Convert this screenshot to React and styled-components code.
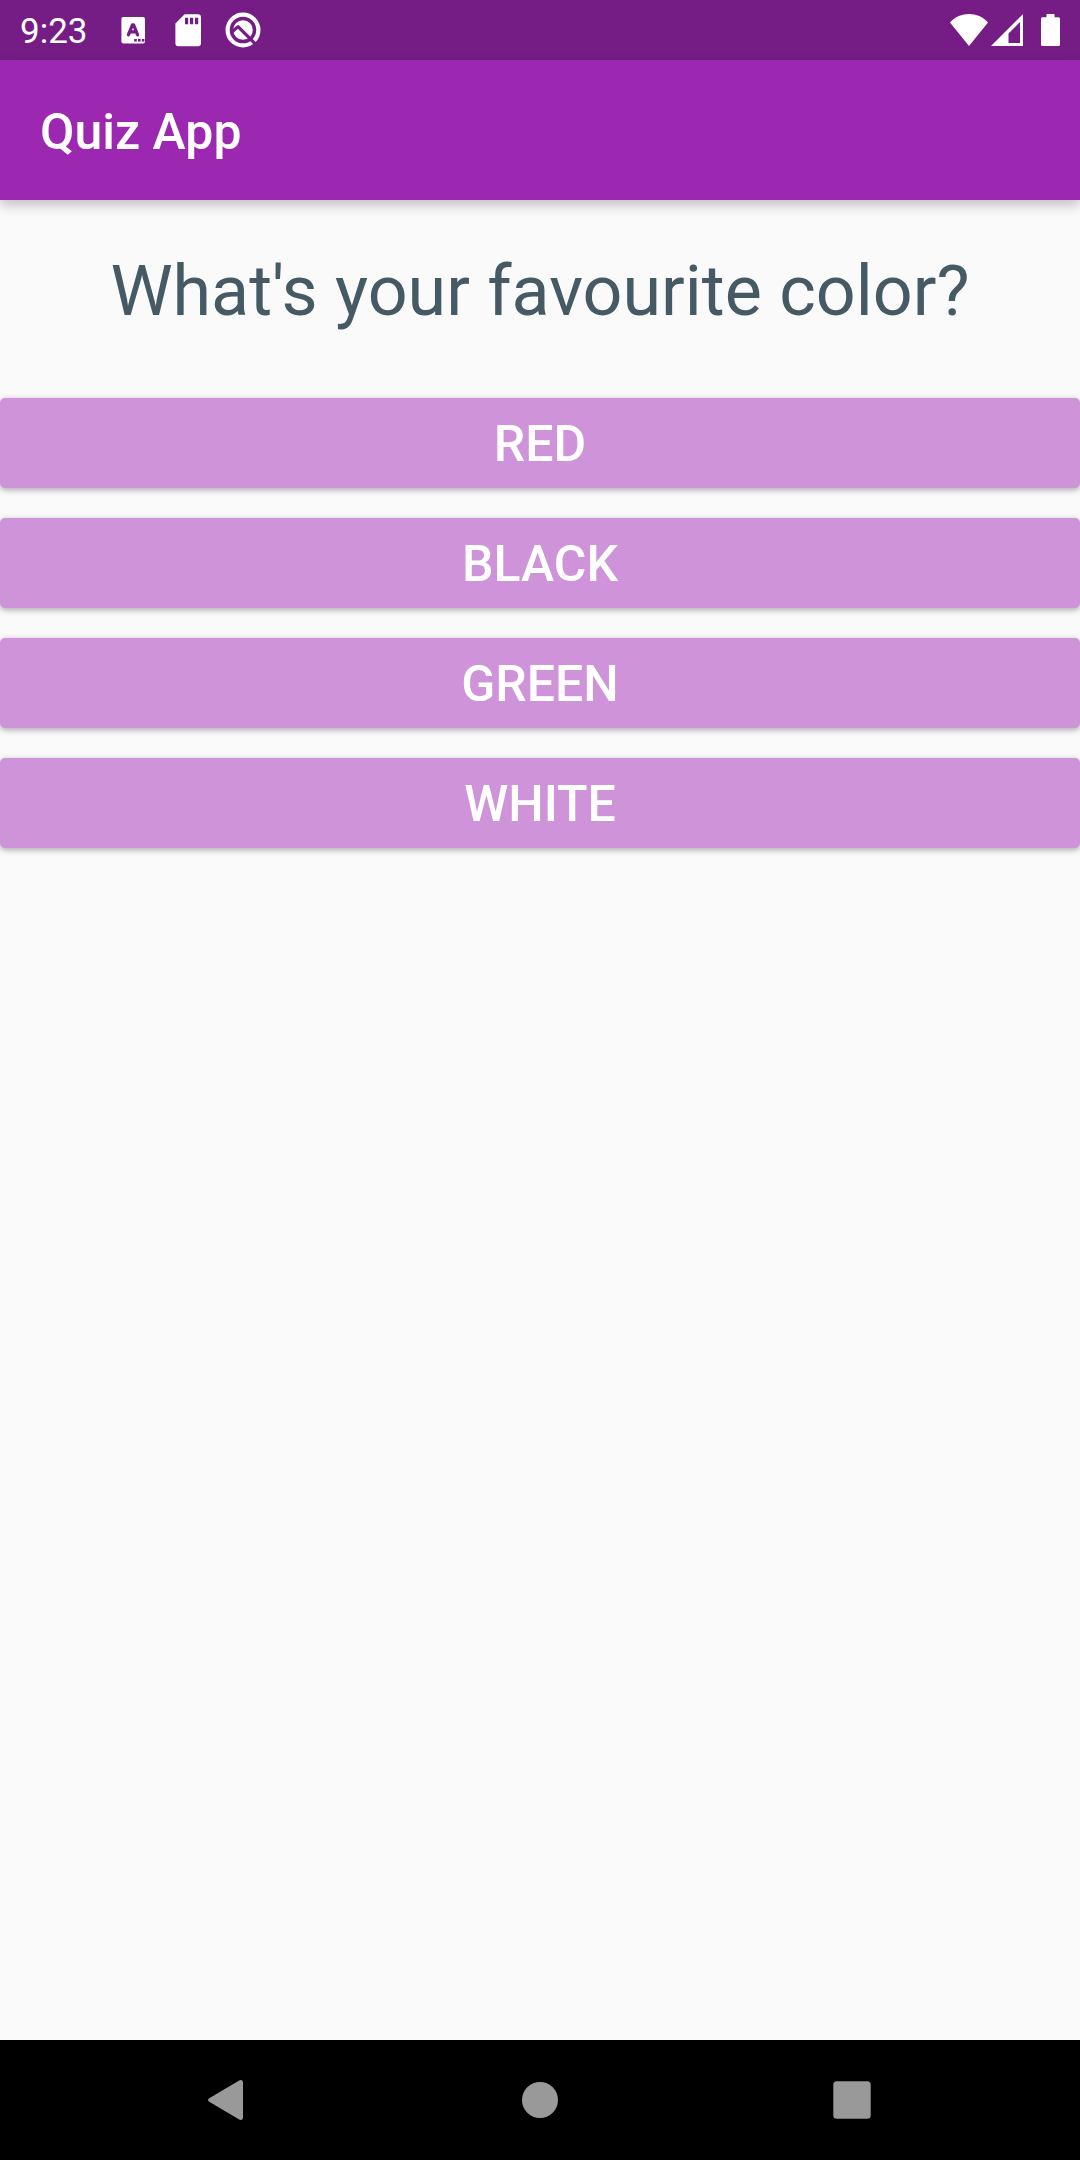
import React from "react";
import styled, { createGlobalStyle } from "styled-components";

const GlobalStyle = createGlobalStyle`
  * { box-sizing: border-box; }
  body { margin: 0; background: #fafafa; font-family: Roboto, sans-serif; }
`;

const Screen = styled.div`
  min-height: 100vh;
  display: flex;
  flex-direction: column;
`;

const StatusBar = styled.div`
  height: 60px;
  padding: 0 20px;
  display: flex;
  align-items: center;
  justify-content: space-between;
  background: #751d84;
  color: #fff;
`;

const StatusGroup = styled.div`
  display: flex;
  align-items: center;
  gap: ${(p) => p.$gap}px;
`;

const Clock = styled.time`
  margin-right: 8px;
  padding-top: 3px;
  font-size: 35px;
  line-height: 44px;
`;

const Glyph = styled.svg`
  display: block;
  flex: none;
`;

const AppBar = styled.header`
  position: relative;
  height: 140px;
  padding: 4px 40px 0;
  display: flex;
  align-items: center;
  background: #9c27b0;
  box-shadow: 0 5px 12px rgba(0, 0, 0, 0.24);
`;

const AppTitle = styled.h1`
  margin: 0;
  color: #fff;
  font-size: 50px;
  font-weight: 500;
  line-height: 60px;
`;

const Content = styled.main`
  flex: 1;
  padding-top: 50px;
`;

const Question = styled.h2`
  margin: 0 0 66px;
  color: #455a64;
  font-size: 70px;
  font-weight: 400;
  line-height: 82px;
  text-align: center;
`;

const Answers = styled.div`
  display: flex;
  flex-direction: column;
  gap: 30px;
`;

const AnswerButton = styled.button`
  width: 100%;
  height: 90px;
  padding: 2px 0 0;
  border: 0;
  border-radius: 5px;
  background: #ce93d8;
  box-shadow: 0 2px 6px rgba(0, 0, 0, 0.32);
  color: #fff;
  font-family: inherit;
  font-size: 50px;
  font-weight: 500;
  line-height: 60px;
  text-transform: uppercase;
  cursor: pointer;
`;

const NavBar = styled.nav`
  height: 120px;
  padding: 0 72px;
  display: grid;
  grid-template-columns: repeat(3, 1fr);
  background: #000;
`;

const NavButton = styled.button`
  display: flex;
  align-items: center;
  justify-content: center;
  padding: 0;
  border: 0;
  background: none;
  color: #999;
  cursor: pointer;
`;

const KeyboardIcon = () => (
  <Glyph width="36" height="36" viewBox="0 0 36 36" aria-hidden="true">
    <rect x="6.4" y="5" width="23.6" height="26.5" rx="2" fill="#fff" />
    <path d="M13.4 22.8 17.4 12.8h1.2l4 10M15 19.8h6" fill="none" stroke="#751d84" strokeWidth="3.2" strokeLinecap="round" strokeLinejoin="round" />
    <g fill="#751d84">
      <rect x="19.2" y="27" width="2.6" height="2.6" />
      <rect x="23" y="27" width="2.6" height="2.6" />
      <rect x="26.8" y="27" width="2.6" height="2.6" />
    </g>
  </Glyph>
);

const SdCardIcon = () => (
  <Glyph width="36" height="36" viewBox="0 0 36 36" aria-hidden="true">
    <path d="M14.6 2.2H28a3 3 0 0 1 3 3v26a3 3 0 0 1-3 3H8.4a3 3 0 0 1-3-3V11.6z" fill="#fff" />
    <path d="M15 5.8h3.2v6.4H15zM20 5.8h3.2v6.4H20zM25 5.8h3.2v6.4H25z" fill="#751d84" />
  </Glyph>
);

const AndroidQIcon = () => (
  <Glyph width="36" height="36" viewBox="0 0 36 36" aria-hidden="true">
    <circle cx="18" cy="18" r="15.4" fill="none" stroke="#fff" strokeWidth="4.2" />
    <circle cx="18" cy="18" r="9.8" fill="#fff" />
    <path d="M7.5 19.5 13 14.6 32 33.6" fill="none" stroke="#751d84" strokeWidth="3.2" strokeLinejoin="round" />
  </Glyph>
);

const WifiIcon = () => (
  <Glyph width="38" height="32" viewBox="0 0 38 32" aria-hidden="true">
    <path d="M0 8.4C10-2.8 28-2.8 38 8.4L19 32z" fill="#fff" />
  </Glyph>
);

const SignalIcon = () => (
  <Glyph width="32" height="32" viewBox="0 0 32 32" aria-hidden="true">
    <path d="M32 0v32H0zM29 8 17.5 19.5V29H29z" fill="#fff" fillRule="evenodd" />
  </Glyph>
);

const BatteryIcon = () => (
  <Glyph width="19" height="32" viewBox="0 0 19 32" aria-hidden="true">
    <path d="M5.5 0h8v3.2H17.5A1.5 1.5 0 0 1 19 4.7V30.5A1.5 1.5 0 0 1 17.5 32H1.5A1.5 1.5 0 0 1 0 30.5V4.7A1.5 1.5 0 0 1 1.5 3.2H5.5z" fill="#fff" />
  </Glyph>
);

const BackIcon = () => (
  <Glyph width="40" height="40" viewBox="0 0 40 40" aria-hidden="true">
    <path d="M1.2 18.300 31.200.4Q35-1 35 3V37Q35 41 31.2 39.6L1.2 21.7Q-1.2 20 1.2 18.3z" fill="currentColor" />
  </Glyph>
);

const HomeIcon = () => (
  <Glyph width="40" height="40" viewBox="0 0 40 40" aria-hidden="true">
    <circle cx="20" cy="20" r="18" fill="currentColor" />
  </Glyph>
);

const RecentsIcon = () => (
  <Glyph width="40" height="40" viewBox="0 0 40 40" aria-hidden="true">
    <rect x="1.3" y="1.3" width="37.4" height="37.4" rx="3.5" fill="currentColor" />
  </Glyph>
);

const answers = ["Red", "Black", "Green", "White"];

export default function App() {
  return (
    <Screen>
      <GlobalStyle />
      <StatusBar>
        <StatusGroup $gap={19}>
          <Clock>9:23</Clock>
          <KeyboardIcon />
          <SdCardIcon />
          <AndroidQIcon />
        </StatusGroup>
        <StatusGroup $gap={3}>
          <WifiIcon />
          <SignalIcon />
          <Glyph width="12" height="32" aria-hidden="true" />
          <BatteryIcon />
        </StatusGroup>
      </StatusBar>
      <AppBar>
        <AppTitle>Quiz App</AppTitle>
      </AppBar>
      <Content>
        <Question>What's your favourite color?</Question>
        <Answers>
          {answers.map((answer) => (
            <AnswerButton key={answer} type="button">{answer}</AnswerButton>
          ))}
        </Answers>
      </Content>
      <NavBar>
        <NavButton type="button" aria-label="Back"><BackIcon /></NavButton>
        <NavButton type="button" aria-label="Home"><HomeIcon /></NavButton>
        <NavButton type="button" aria-label="Recent apps"><RecentsIcon /></NavButton>
      </NavBar>
    </Screen>
  );
}
